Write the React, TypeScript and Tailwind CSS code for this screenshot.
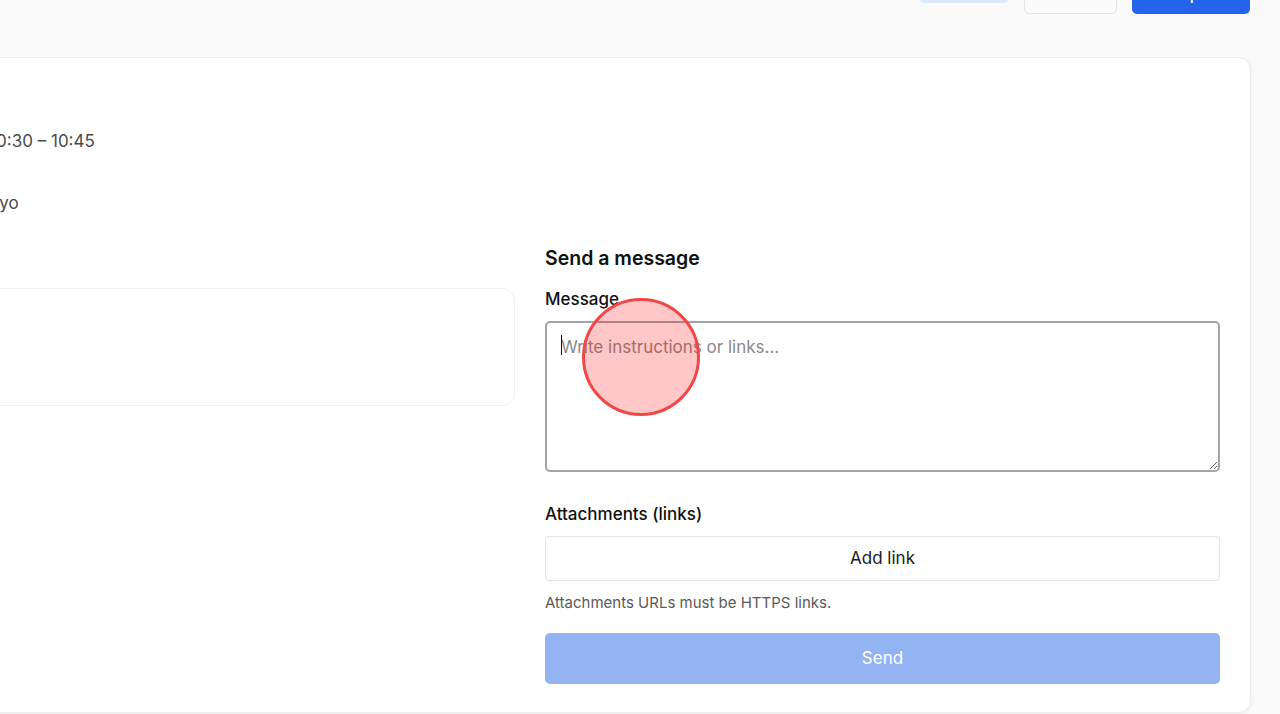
import React from 'react';

export default function App() {
  return (
    <div className="relative h-[714px] w-full overflow-hidden bg-[#fafafa] font-['Inter',sans-serif] text-[#111]">
      {/* page is scrolled: content starts left of the viewport and above it */}
      <div className="ml-[-137px] mt-[-26px] flex w-[1388px] flex-col">
        {/* header actions */}
        <div className="flex h-10 items-center justify-end pr-px">
          <div className="h-[18px] w-[88px] rounded-[4px] bg-[#dde9fc]" />
          <button className="ml-4 h-10 w-[93px] rounded-[5px] border border-[#e3e3e3] bg-[#fafafa] text-[15px] text-[#222]">
            Cancel
          </button>
          <button className="ml-[15px] h-10 w-[118px] rounded-[5px] bg-[#2563eb] text-base font-medium text-white">
            Complete
          </button>
        </div>

        {/* booking card */}
        <div className="mt-[43px] grid h-[656px] grid-cols-[minmax(0,1fr)_675px] gap-[30px] rounded-xl border border-[#ebebeb] bg-white px-[30px] shadow-[0_1px_4px_rgba(0,0,0,0.05)]">
          <div className="flex flex-col pt-[71px]">
            <p className="text-[17px] leading-6 text-[#4a4a4a]">Scheduled: 10:30 – 10:45</p>
            <p className="mt-[38px] text-[17px] leading-6 text-[#4a4a4a]">Address: Tokyo</p>
            <div className="mt-[73px] h-[118px] rounded-xl border border-[#efefef]" />
          </div>

          <div className="flex flex-col pt-[186px]">
            <h2 className="text-[19.5px] leading-7 font-semibold">Send a message</h2>
            <label className="mt-[15px] text-[17px] leading-6 font-medium">Message</label>
            <div className="relative mt-[10px]">
              <textarea
                className="block h-[151px] w-full rounded-[5px] border-2 border-[#a3a3ab] px-[14px] pt-[12px] pb-[10px] text-[17px] leading-6 outline-none placeholder:text-[#8a8a8a]"
                placeholder="Write instructions or links..."
              />
              <span className="absolute top-[14px] left-[16px] h-5 w-px bg-[#111]" />
            </div>
            <label className="mt-[30px] text-[17px] leading-6 font-medium">Attachments (links)</label>
            <button className="mt-[10px] h-[45px] w-full rounded-[4px] border border-[#e3e3e3] bg-white text-[17px] text-[#1a1a1a]">
              Add link
            </button>
            <p className="mt-3 text-[15px] leading-5 text-[#5a5a5a]">Attachments URLs must be HTTPS links.</p>
            <button className="mt-5 h-[51px] w-full rounded-[5px] bg-[#94b3f3] text-[17px] text-white">
              Send
            </button>
          </div>
        </div>
      </div>

      {/* click indicator */}
      <div className="pointer-events-none absolute top-[298px] left-[582px] h-[118px] w-[118px] rounded-full border-[3px] border-[#f04848] bg-[rgba(255,0,0,0.22)]" />
    </div>
  );
}
